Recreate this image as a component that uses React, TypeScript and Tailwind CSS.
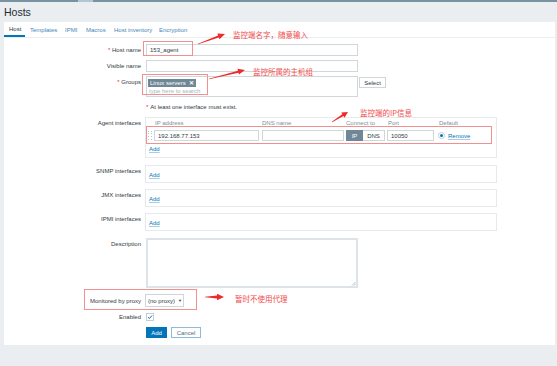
import clsx from 'clsx'
import type { ReactNode } from 'react'

const tabs = [
  { label: 'Host', w: 'w-[21px]', active: true },
  { label: 'Templates', w: 'w-[35px]' },
  { label: 'IPMI', w: 'w-[21px]' },
  { label: 'Macros', w: 'w-[28px]' },
  { label: 'Host inventory', w: 'w-[45px]' },
  { label: 'Encryption', w: 'w-[45px]' },
]

function Row({
  label,
  required,
  className,
  labelClass,
  children,
}: {
  label: string
  required?: boolean
  className?: string
  labelClass?: string
  children: ReactNode
}) {
  return (
    <div className={clsx('flex items-start', className)}>
      <div
        className={clsx(
          'w-[137px] shrink-0 text-right text-[6px] leading-[8px] text-[#2f3b42]',
          labelClass ?? 'pt-[2px]'
        )}
      >
        {required && <span className="text-[#e33734]">* </span>}
        {label}
      </div>
      <div className="ml-[5px]">{children}</div>
    </div>
  )
}

function AddLink() {
  return (
    <span className="text-[6px] leading-[8px] text-[#0275b8] underline decoration-[#a9cbe3] underline-offset-1">
      Add
    </span>
  )
}

// tapered arrow: thin tail widening into the head
function arrowPoints(x1: number, y1: number, x2: number, y2: number, head: number, hw: number, tail: number) {
  const dx = x2 - x1
  const dy = y2 - y1
  const len = Math.hypot(dx, dy)
  const ux = dx / len
  const uy = dy / len
  const nx = -uy
  const ny = ux
  const bx = x2 - ux * head
  const by = y2 - uy * head
  const pts = [
    [x1 + nx * 0.3, y1 + ny * 0.3],
    [bx + nx * tail, by + ny * tail],
    [bx + nx * hw, by + ny * hw],
    [x2, y2],
    [bx - nx * hw, by - ny * hw],
    [bx - nx * tail, by - ny * tail],
    [x1 - nx * 0.3, y1 - ny * 0.3],
  ]
  return pts.map((p) => p.map((v) => v.toFixed(1)).join(',')).join(' ')
}

function Annotations() {
  const note = "absolute font-['Noto_Sans_CJK_SC',sans-serif] text-[7.5px] leading-[10px] text-[#f24a4a] whitespace-nowrap"
  return (
    <>
      {/* red highlight boxes */}
      <div className="absolute left-[143px] top-[41px] h-[15px] w-[50px] border border-[#f29090]" />
      <div className="absolute left-[142px] top-[74px] h-[21px] w-[66px] border border-[#f29090]" />
      <div className="absolute left-[146px] top-[126px] h-[18px] w-[346px] border border-[#f29090]" />
      <div className="absolute left-[84px] top-[289px] h-[21px] w-[113px] border border-[#f29090]" />

      <svg className="pointer-events-none absolute left-0 top-0" width="557" height="366" aria-hidden="true">
        <polygon points={arrowPoints(198, 44, 225, 34, 7, 3, 1)} fill="#ee2b2b" />
        <polygon points={arrowPoints(209, 79, 245, 70, 7, 3, 1)} fill="#ee2b2b" />
        <polygon points={arrowPoints(332, 122, 348, 112, 6, 3, 1.1)} fill="#ee2b2b" />
        <polygon points={arrowPoints(205, 297, 224, 297, 7, 3.2, 1.4)} fill="#ee2b2b" />
      </svg>

      <span className={clsx(note, 'left-[233px] top-[30px]')}>监控端名字，随意输入</span>
      <span className={clsx(note, 'left-[253px] top-[67px]')}>监控所属的主机组</span>
      <span className={clsx(note, 'left-[360px] top-[108px]')}>监控端的IP信息</span>
      <span className={clsx(note, 'left-[235px] top-[294px]')}>暂时不使用代理</span>
    </>
  )
}

export default function App() {
  return (
    <div className="relative h-[366px] w-[557px] overflow-hidden bg-[#ebeef0] font-['Liberation_Sans',Arial,sans-serif] text-[6px] leading-[8px]">
      {/* top bar line */}
      <div className="relative h-[2px] bg-[#7892a2]">
        <div className="absolute left-[78px] top-0 h-[2px] w-[15px] bg-[#b3c6d3]" />
      </div>

      {/* Title */}
      <div className="flex h-[20px] items-center px-[4px] text-[10.5px] leading-[12px] text-[#1f2c33]">Hosts</div>

      {/* Form panel */}
      <div className="ml-[4px] mr-[2px] h-[323px] bg-white">
        <nav className="flex h-[16px] border-b border-[#ebeef0]">
          {tabs.map((t) => (
            <div
              key={t.label}
              className={clsx(
                'flex h-[15px] shrink-0 items-center whitespace-nowrap pl-[5px] text-[6px]',
                t.w,
                t.active ? 'border-b-2 border-[#0275b8] text-[#2f3b42]' : 'text-[#3f86b8]'
              )}
            >
              {t.label}
            </div>
          ))}
        </nav>

        <div className="pt-[6px]">
          <Row label="Host name" required>
            <div className="flex h-[12px] w-[212px] items-center border border-[#d0d7db] pl-[3px] text-[#2f3b42]">
              153_agent
            </div>
          </Row>

          <Row label="Visible name" className="mt-[4px]">
            <div className="h-[12px] w-[212px] border border-[#d0d7db]" />
          </Row>

          <Row label="Groups" required className="mt-[4px]">
            <div className="flex items-start">
              <div className="h-[21px] w-[212px] border border-[#d0d7db] pl-[1px] pt-[2px]">
                <div className="flex h-[8px] w-fit items-center gap-[3px] bg-[#6f8796] px-[2px] text-white">
                  Linux servers <span className="font-bold">✕</span>
                </div>
                <div className="pl-[1px] leading-[9px] text-[#a7b5be]">type here to search</div>
              </div>
              <div className="ml-[1px] mt-[1px] flex h-[11px] w-[27px] items-center justify-center border border-[#cfd6da] bg-white text-[#2f3b42]">
                Select
              </div>
            </div>
          </Row>

          <div className="mt-[5px] flex h-[10px] items-center pl-[142px] text-[#2f3b42]">
            <span className="mr-[2px] text-[#e33734]">*</span>At least one interface must exist.
          </div>

          <Row label="Agent interfaces" className="mt-[5px]">
            <div className="-ml-[1px] h-[41px] w-[352px] border border-[#e6eaec] pl-[1px] pt-[1px]">
              <div className="grid h-[8px] grid-cols-[105px_82px_40px_49px_60px] gap-x-[2px] pl-[7px] text-[#7a8f9c]">
                <span className="pl-[1px]">IP address</span>
                <span className="pl-[1px]">DNS name</span>
                <span className="pl-[1px]">Connect to</span>
                <span className="pl-[1px]">Port</span>
                <span className="pl-[1px]">Default</span>
              </div>
              <div className="mt-[3px] flex h-[11px] items-center">
                <div className="ml-[1px] grid h-[10px] w-[4px] grid-cols-2 gap-[1px]">
                  {Array.from({ length: 8 }).map((_, i) => (
                    <span key={i} className="h-[1px] w-[1px] bg-[#b9c4ca]" />
                  ))}
                </div>
                <div className="ml-[2px] flex h-[11px] w-[105px] items-center border border-[#d0d7db] pl-[3px] text-[#2f3b42]">
                  192.168.77.153
                </div>
                <div className="ml-[3px] h-[11px] w-[82px] border border-[#d0d7db]" />
                <div className="ml-[2px] flex h-[11px] w-[39px]">
                  <span className="flex w-[17px] items-center justify-center bg-[#6f8796] text-white">IP</span>
                  <span className="flex w-[22px] items-center justify-center border border-l-0 border-[#cfd6da] text-[#2f3b42]">
                    DNS
                  </span>
                </div>
                <div className="ml-[2px] flex h-[11px] w-[47px] items-center border border-[#d0d7db] pl-[3px] text-[#2f3b42]">
                  10050
                </div>
                <span className="ml-[4px] flex h-[7px] w-[7px] items-center justify-center rounded-full border border-[#c4ced3]">
                  <span className="h-[3px] w-[3px] rounded-full bg-[#0275b8]" />
                </span>
                <span className="ml-[3px] text-[#0275b8] underline decoration-[#a9cbe3] underline-offset-1">
                  Remove
                </span>
              </div>
              <div className="mt-[4px] flex h-[8px] items-center pl-[2px]">
                <AddLink />
              </div>
            </div>
          </Row>

          {['SNMP interfaces', 'JMX interfaces', 'IPMI interfaces'].map((l, i) => (
            <Row key={l} label={l} className={i === 0 ? 'mt-[7px]' : 'mt-[6px]'} labelClass="pt-[2px]">
              <div className="-ml-[1px] flex h-[18px] w-[352px] items-center border border-[#e6eaec] pl-[3px] pt-[2px]">
                <AddLink />
              </div>
            </Row>
          ))}

          <Row label="Description" className="mt-[7px]">
            <div className="relative h-[50px] w-[212px] border-2 border-[#dde3e6]">
              <svg className="absolute bottom-0 right-0" width="5" height="5" viewBox="0 0 5 5" aria-hidden="true">
                <path d="M4.5 1 L1 4.5 M4.5 3 L3 4.5" stroke="#9aa6ad" strokeWidth="0.7" />
              </svg>
            </div>
          </Row>

          <Row label="Monitored by proxy" className="mt-[6px]" labelClass="pt-[3px]">
            <div className="-ml-[1px] flex h-[13px] w-[39px] items-center gap-[3px] border border-[#d0d7db] pl-[2px] text-[#2f3b42]">
              (no proxy) <span className="text-[4px]">▼</span>
            </div>
          </Row>

          <Row label="Enabled" className="mt-[6px]" labelClass="pt-0">
            <div className="flex h-[8px] w-[8px] items-center justify-center border border-[#c4ced3]">
              <svg width="6" height="6" viewBox="0 0 6 6" aria-hidden="true">
                <path d="M1 3.2 L2.4 4.5 L5 1.5" fill="none" stroke="#0275b8" strokeWidth="1" />
              </svg>
            </div>
          </Row>

          <div className="mt-[6px] flex gap-[4px] pl-[142px]">
            <div className="flex h-[11px] w-[21px] items-center justify-center bg-[#0275b8] text-white">Add</div>
            <div className="flex h-[11px] w-[30px] items-center justify-center border border-[#8fbadb] bg-white text-[#4f6b7d]">
              Cancel
            </div>
          </div>
        </div>
      </div>

      <Annotations />
    </div>
  )
}
